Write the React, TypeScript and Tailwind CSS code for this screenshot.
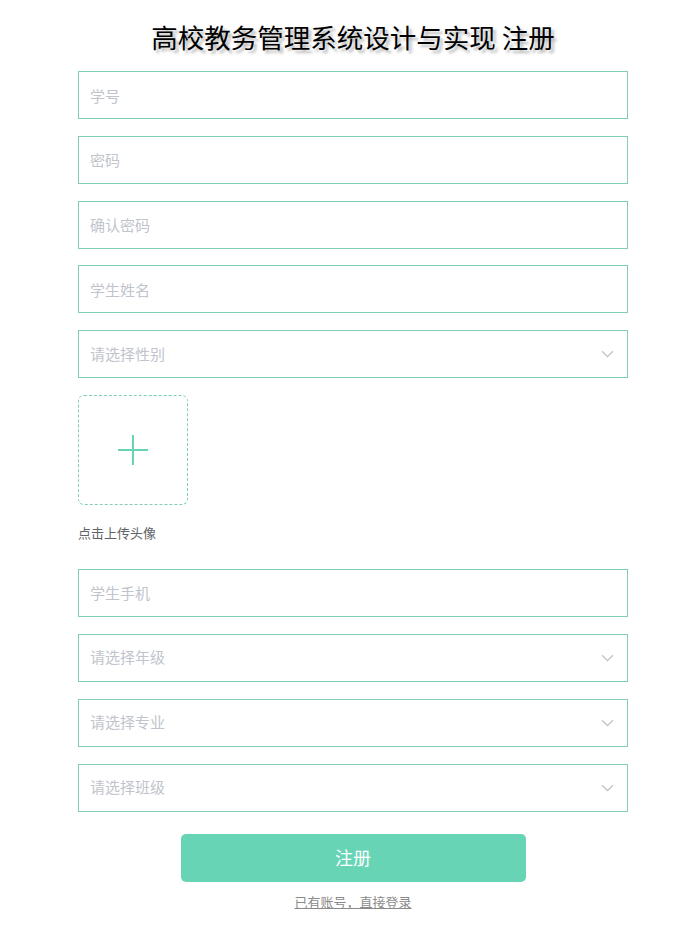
import React from "react";

const font = { fontFamily: '"Noto Sans CJK SC", "Noto Sans", sans-serif' };

function Input({ placeholder }: { placeholder: string }) {
  return (
    <input
      className="block w-full h-[48px] border border-[#82cdb9] px-[11px] text-[15px] text-[#606266] placeholder:text-[#c0c4cc] outline-none bg-white"
      placeholder={placeholder}
      style={font}
    />
  );
}

function Select({ placeholder }: { placeholder: string }) {
  return (
    <div className="flex items-center justify-between w-full h-[48px] border border-[#82cdb9] pl-[11px] pr-[13px] bg-white">
      <span className="text-[15px] text-[#c0c4cc]">{placeholder}</span>
      <svg width="13" height="8" viewBox="0 0 13 8" fill="none">
        <path d="M1 1.2 L6.5 6.5 L12 1.2" stroke="#c0c4cc" strokeWidth="1.3" />
      </svg>
    </div>
  );
}

export default function App() {
  return (
    <div className="min-h-[938px] bg-white" style={font}>
      <div className="ml-[78px] w-[550px] pt-[18px]">
        <h1
          className="text-center text-[26.5px] leading-[38px] text-black mb-[15px] font-normal"
          style={{ textShadow: "3px 3px 3px #b5b5b5" }}
        >
          高校教务管理系统设计与实现 注册
        </h1>
        <div className="flex flex-col gap-[16.75px]">
          <Input placeholder="学号" />
          <Input placeholder="密码" />
          <Input placeholder="确认密码" />
          <Input placeholder="学生姓名" />
          <Select placeholder="请选择性别" />
          <div>
            <div className="w-[110px] h-[110px] border border-dashed border-[#82cdb9] rounded-[6px] flex items-center justify-center">
              <svg width="32" height="32" viewBox="0 0 32 32">
                <path d="M16 1 V31 M1 16 H31" stroke="#67d5b5" strokeWidth="2" />
              </svg>
            </div>
            <div className="mt-[20px] mb-[11px] text-[13px] leading-[16px] text-[#606266]">点击上传头像</div>
          </div>
        </div>
        <div className="flex flex-col gap-[17px] mt-[16.75px]">
          <Input placeholder="学生手机" />
          <Select placeholder="请选择年级" />
          <Select placeholder="请选择专业" />
          <Select placeholder="请选择班级" />
        </div>
        <div className="flex flex-col items-center mt-[22px]">
          <button className="w-[345px] h-[48px] rounded-[5px] bg-[#67d5b5] text-white text-[18px]" style={font}>
            注册
          </button>
          <a className="mt-[10px] text-[13px] leading-[20px] text-[#8a8a8a] underline cursor-pointer">已有账号，直接登录</a>
        </div>
      </div>
    </div>
  );
}
